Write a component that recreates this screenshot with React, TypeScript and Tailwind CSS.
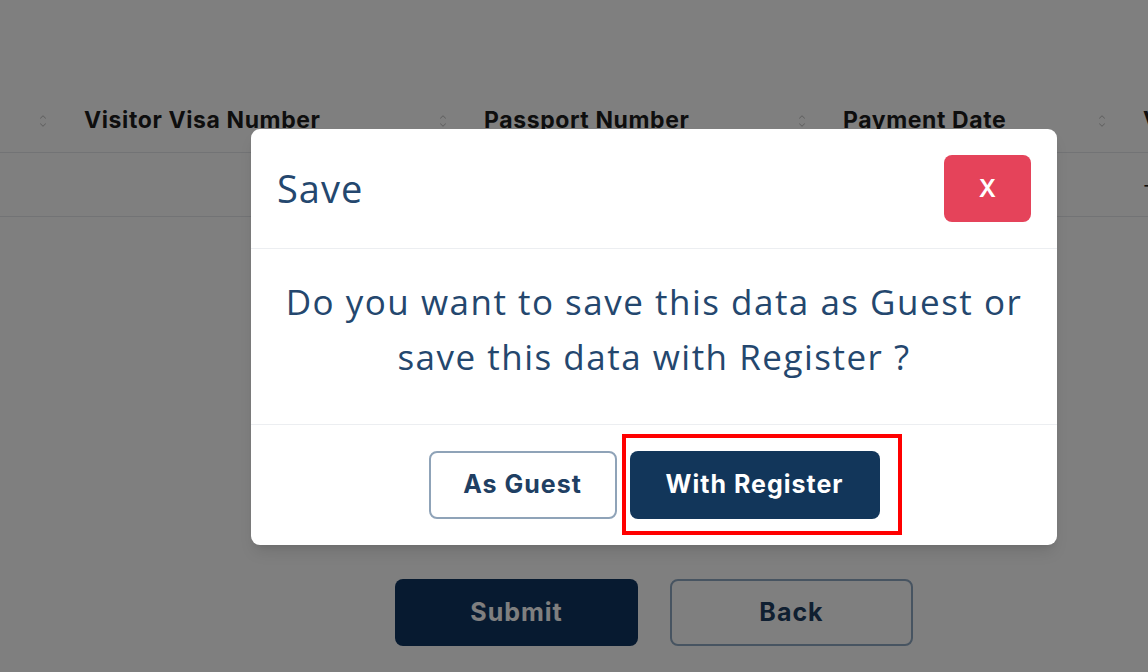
import { ChevronDown, ChevronUp } from "lucide-react";

const columns = [
  { title: "Visitor Visa Number", width: "w-[400px]" },
  { title: "Passport Number", width: "w-[359px]" },
  { title: "Payment Date", width: "w-[300px]" },
  { title: "Visa Status", width: "w-[200px]" },
];

function SortIcon() {
  return (
    <div className="flex w-[10px] flex-col items-center text-[#c4c4c4]">
      <ChevronUp size={10} strokeWidth={2.5} className="-mb-[2px]" />
      <ChevronDown size={10} strokeWidth={2.5} />
    </div>
  );
}

export default function App() {
  return (
    <div className="relative h-[672px] w-[1148px] overflow-hidden bg-white font-['Inter',sans-serif]">
      {/* page behind the dialog */}
      <div className="pt-[94px]">
        <div className="flex h-[59px] items-center border-b border-[#e5e7eb] pb-[5px] pl-[38px] whitespace-nowrap">
          {columns.map((col) => (
            <div key={col.title} className={`${col.width} flex shrink-0 items-center gap-[36px]`}>
              <SortIcon />
              <span className="text-[23px] font-bold tracking-[0.6px] text-[#1c1c1c]">
                {col.title}
              </span>
            </div>
          ))}
        </div>
        <div className="flex h-[64px] items-center border-b border-[#e5e7eb] pl-[1143px]">
          <span className="text-[20px] text-[#1c1c1c]">-</span>
        </div>
        <div className="mt-[362px] flex justify-center gap-[32px] pl-[160px]">
          <button className="h-[67px] w-[243px] rounded-[8px] bg-[#0e3460] text-[25px] font-bold tracking-[1px] text-white">
            Submit
          </button>
          <button className="h-[67px] w-[243px] rounded-[8px] border-2 border-[#8fa8c2] bg-white text-[25px] font-bold tracking-[1px] text-[#1f3f63]">
            Back
          </button>
        </div>
      </div>

      {/* overlay */}
      <div className="absolute inset-0 bg-black/50" />

      {/* dialog */}
      <div className="absolute left-[251px] top-[129px] w-[806px] rounded-[9px] bg-white shadow-lg">
        <div className="flex h-[120px] items-center justify-between border-b border-[#eceef1] pl-[26px] pr-[26px]">
          <span className="font-['Open_Sans',sans-serif] text-[38px] tracking-[1px] text-[#24476e]">Save</span>
          <button className="flex h-[67px] w-[87px] items-center justify-center rounded-[8px] bg-[#e5435a] text-[24px] font-semibold text-white">
            X
          </button>
        </div>
        <div className="flex h-[176px] items-center justify-center border-b border-[#eceef1] pb-[16px] text-center font-['Open_Sans',sans-serif] text-[35px] leading-[55px] tracking-[1.5px] text-[#24476e]">
          <p>
            Do you want to save this data as Guest or
            <br />
            save this data with Register ?
          </p>
        </div>
        <div className="flex h-[120px] items-center justify-center gap-[13px]">
          <button className="h-[68px] w-[188px] rounded-[8px] border-2 border-[#8fa3b8] bg-white text-[25px] font-bold tracking-[1px] text-[#1f3f63]">
            As Guest
          </button>
          <button className="h-[68px] w-[250px] rounded-[8px] bg-[#12365a] text-[25px] font-bold tracking-[1px] text-white">
            With Register
          </button>
        </div>
      </div>

      {/* highlight annotation */}
      <div className="absolute left-[622px] top-[434px] h-[101px] w-[280px] border-[4px] border-[#ff0000]" />
    </div>
  );
}
